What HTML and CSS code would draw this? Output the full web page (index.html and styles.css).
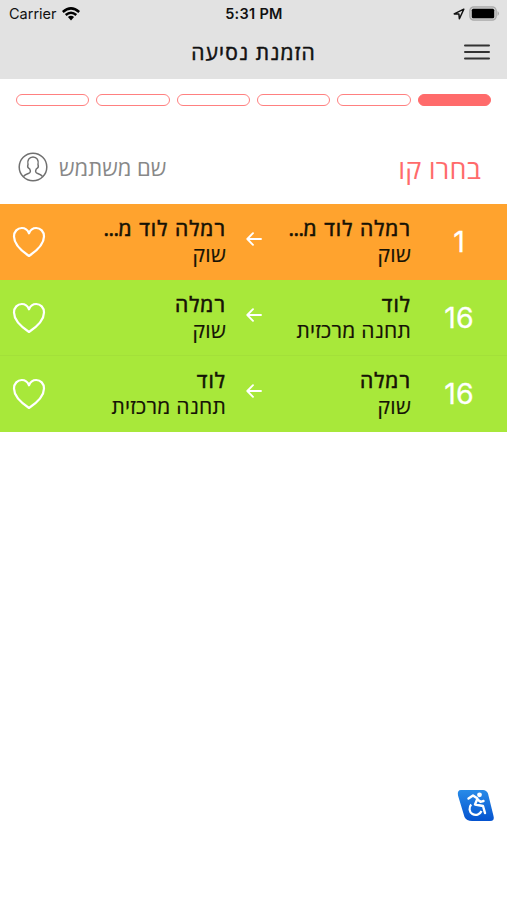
FILE: index.html
```html
<!DOCTYPE html>
<html lang="he" dir="rtl">
<head>
<meta charset="utf-8">
<title>הזמנת נסיעה</title>
<link rel="stylesheet" href="styles.css">
</head>
<body>
<svg class="defs" width="0" height="0" aria-hidden="true">
  <symbol id="heart" viewBox="0 0 34 32"><path d="M17 30C12.500 27 2 19.500 2 10.500C2 5.500 5.500 2 9.800 2C13 2 15.600 3.800 17 7.300C18.400 3.800 21 2 24.200 2C28.500 2 32 5.500 32 10.500C32 19.500 21.500 27 17 30Z" fill="none" stroke="#fff" stroke-width="2.200" stroke-linejoin="round"/></symbol>
  <symbol id="arrow" viewBox="0 0 16 14"><path d="M15 7H1.500M7 1.200L1.300 7L7 12.800" fill="none" stroke="#fff" stroke-width="1.900" stroke-linecap="round" stroke-linejoin="round"/></symbol>
</svg>
<header class="top">
  <div class="status" dir="ltr">
    <div class="carrier"><span>Carrier</span>
      <svg width="18" height="14" viewBox="0 0 18 14"><path d="M.8 5Q9-2.200 17.200 5M3.700 8Q9 3.500 14.300 8" fill="none" stroke="#000" stroke-width="2.500"/><path d="M5.900 10Q9 7.600 12.100 10L9 13.400Z"/></svg>
    </div>
    <div class="time">5:31 PM</div>
    <div class="power">
      <svg width="12" height="12" viewBox="0 0 12 12"><path d="M1.200 5.900L10.800 1.200L6.400 10.800L5.900 6.100Z" fill="none" stroke="#111" stroke-width="1.500" stroke-linejoin="round"/></svg>
      <svg width="31" height="15" viewBox="0 0 31 15"><rect x=".8" y=".8" width="26.400" height="13.400" rx="4" fill="#ccc" stroke="#aaa" stroke-width="1.200"/><rect x="2.800" y="2.800" width="22.400" height="9.400" rx="1.500" fill="#000"/><path d="M28.600 5Q31 7.500 28.600 10Z" fill="#999"/></svg>
    </div>
  </div>
  <div class="nav">
    <svg class="menu" width="26" height="18" viewBox="0 0 26 18"><path d="M1 2.500H25M1 9H25M1 15.500H25" stroke="#333" stroke-width="2" stroke-linecap="round"/></svg>
    <h1>הזמנת נסיעה</h1>
  </div>
</header>
<div class="steps"><i class="on"></i><i></i><i></i><i></i><i></i><i></i></div>
<div class="intro">
  <h2>בחרו קו</h2>
  <div class="user"><span>שם משתמש</span>
    <svg width="30" height="30" viewBox="0 0 30 30" fill="none" stroke="#707070" stroke-width="1.500"><circle cx="15" cy="15" r="13.800"/><path d="M5.300 24.600Q6.500 22.600 10.800 21.200C12.700 20.500 12.800 18.800 11.600 16.900C10.200 16.300 9.300 14.500 10 12.600C9 8.300 11.200 5 15 5S21 8.300 20 12.600C20.700 14.500 19.800 16.300 18.400 16.900C17.200 18.800 17.300 20.500 19.200 21.200Q23.500 22.600 24.700 24.600"/></svg>
  </div>
</div>
<main>
  <div class="row orange">
    <div class="num">1</div>
    <div class="stop"><b>רמלה לוד מ<span class="dots">...</span></b><span>שוק</span></div>
    <svg class="arrow"><use href="#arrow"/></svg>
    <div class="stop"><b>רמלה לוד מ<span class="dots">...</span></b><span>שוק</span></div>
    <svg class="heart"><use href="#heart"/></svg>
  </div>
  <div class="row">
    <div class="num">16</div>
    <div class="stop"><b>לוד</b><span>תחנה מרכזית</span></div>
    <svg class="arrow"><use href="#arrow"/></svg>
    <div class="stop"><b>רמלה</b><span>שוק</span></div>
    <svg class="heart"><use href="#heart"/></svg>
  </div>
  <div class="row last">
    <div class="num">16</div>
    <div class="stop"><b>רמלה</b><span>שוק</span></div>
    <svg class="arrow"><use href="#arrow"/></svg>
    <div class="stop"><b>לוד</b><span>תחנה מרכזית</span></div>
    <svg class="heart"><use href="#heart"/></svg>
  </div>
</main>
<div class="access">
  <svg width="38" height="33" viewBox="0 0 38 33"><defs><linearGradient id="blue" x1="0" y1="0" x2="0" y2="1"><stop offset="0" stop-color="#288be8"/><stop offset="1" stop-color="#0553cf"/></linearGradient></defs><path d="M4 1H26Q29.500 1 31 4.500L36.500 27Q38 32 33 32H15Q9.500 32 7.500 28L1 6.500Q0 1 4 1Z" fill="url(#blue)"/><circle cx="22.500" cy="5.800" r="2.400" fill="#fff"/><path d="M11.500 9.500L16 6.500L20.500 9.500L18 15.500L26 17L28 24M20.500 10.500L23.500 12.800L26.500 12" fill="none" stroke="#fff" stroke-width="2.400" stroke-linejoin="round" stroke-linecap="round"/><path d="M14.200 15.500A6.200 6.200 0 1 0 24.500 22" fill="none" stroke="#fff" stroke-width="2.200"/></svg>
</div>
</body>
</html>
```

FILE: styles.css
```css
* { box-sizing: border-box; }
body {
  margin: 0;
  height: 900px;
  display: flex;
  flex-direction: column;
  background: #fff;
  font-family: "Open Sans", "Noto Sans", sans-serif;
  color: #111;
  overflow: hidden;
}
svg { display: block; flex: none; }
.defs { position: absolute; }
.top { height: 79px; background: #e2e2e2; flex: none; }
.status {
  height: 27px;
  display: grid;
  grid-template-columns: 1fr auto 1fr;
  align-items: center;
  padding: 0 7px 0 9px;
  font: 14.500px/27px Inter, sans-serif;
}
.carrier { display: flex; align-items: center; gap: 5px; }
.time { font-weight: 600; letter-spacing: .3px; margin-right: 1px; }
.power { display: flex; align-items: center; justify-content: flex-end; gap: 4px; }
.nav {
  height: 50px;
  display: grid;
  grid-template-columns: 26px 1fr 26px;
  align-items: center;
  padding: 0 17px;
}
h1 { margin: 0 0 1px; text-align: center; font-size: 21px; line-height: 30px; font-weight: 400; letter-spacing: 1.150px; -webkit-text-stroke: .5px; }
.steps { display: flex; gap: 7px; padding: 15px 16px 0; height: 60px; flex: none; }
.steps i { flex: 1; height: 12px; border: 1.500px solid #ff8080; border-radius: 6px; }
.steps .on { background: #ff6b6b; border-color: #ff6b6b; }
.intro {
  height: 65px;
  flex: none;
  display: flex;
  justify-content: space-between;
  padding: 12px 26px 0 18px;
}
h2 { margin: 0; font-size: 27px; line-height: 36px; font-weight: 400; color: #ff6b6b; letter-spacing: .2px; }
.user { display: flex; gap: 11px; height: 31px; align-items: center; font-size: 22px; line-height: 30px; color: #888; }
.row {
  height: 76px;
  display: grid;
  grid-template-columns: 80px 149px 36px 180px 34px;
  align-items: center;
  padding: 0 16px 2px 12px;
  background: #a8e83a;
}
.row.last { box-shadow: 0 -1px #a3e039; }
.row.orange { background: #ffa32e; }
.num { width: 64px; padding-top: 2px; font: 400 28.500px/36px Inter, sans-serif; -webkit-text-stroke: .3px; color: #fff; text-align: center; }
.stop { display: flex; flex-direction: column; align-items: flex-start; font-size: 21px; line-height: 26px; white-space: nowrap; color: #151205; letter-spacing: .25px; -webkit-text-stroke: .2px; }
.stop b { font-weight: 400; letter-spacing: 1.050px; -webkit-text-stroke: .6px; }
.dots { letter-spacing: -.5px; }
.arrow { width: 16px; height: 14px; margin-bottom: 4px; }
.heart { width: 34px; height: 32px; margin-top: 1px; }
.access { margin: auto 0 78px; padding-right: 12px; }
```
